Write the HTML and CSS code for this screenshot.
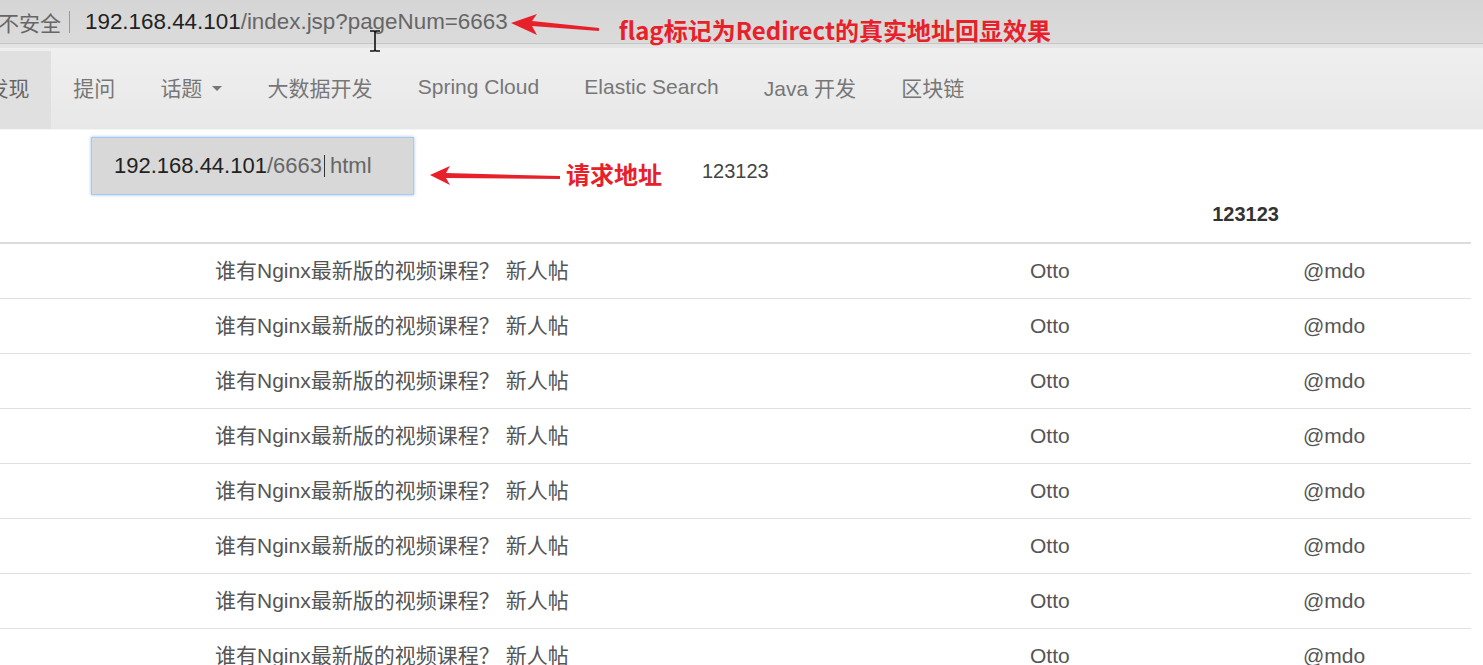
FILE: index.html
```html
<!DOCTYPE html>
<html lang="zh-CN">
<head>
    <meta charset="UTF-8">
    <meta name="viewport" content="width=device-width, initial-scale=1.0">
    <title>社区 - 帖子列表</title>
    <link rel="stylesheet" href="styles.css">
</head>
<body>
    <!-- Адресная строка браузера -->
    <div class="address-bar">
        <span class="insecure">不安全</span>
        <span class="divider"></span>
        <span class="url"><span class="host">192.168.44.101</span>/index.jsp?pageNum=6663</span>
        <svg class="arrow arrow-top" width="90" height="24" viewBox="0 0 90 24">
            <polygon points="0,9 26,0 21,7 88,14 88,17 21,12 26,21" fill="#e8202a"/>
        </svg>
        <span class="note note-top">flag标记为Redirect的真实地址回显效果</span>
    </div>
    <div class="bar-strip"></div>

    <!-- Навигация -->
    <nav class="navbar">
        <ul class="nav-list">
            <li class="nav-item active">发现</li>
            <li class="nav-item">提问</li>
            <li class="nav-item">话题<span class="caret"></span></li>
            <li class="nav-item">大数据开发</li>
            <li class="nav-item">Spring Cloud</li>
            <li class="nav-item">Elastic Search</li>
            <li class="nav-item">Java 开发</li>
            <li class="nav-item">区块链</li>
        </ul>
    </nav>

    <!-- Строка с адресом запроса -->
    <div class="request-row">
        <div class="request-box"><span class="host">192.168.44.101</span>/6663<span class="text-caret"></span>html</div>
        <svg class="arrow arrow-request" width="132" height="22" viewBox="0 0 132 22">
            <polygon points="0,9 20,0 16,7 130,10 130,13 16,12 20,19" fill="#e8202a"/>
        </svg>
        <span class="note note-request">请求地址</span>
        <span class="request-value">123123</span>
    </div>

    <!-- Таблица тем -->
    <table class="topic-table">
        <colgroup>
            <col class="col-index">
            <col class="col-title">
            <col class="col-author">
            <col class="col-user">
        </colgroup>
        <thead>
            <tr>
                <th></th>
                <th></th>
                <th class="head-num">123123</th>
                <th></th>
            </tr>
        </thead>
        <tbody>
            <tr><td></td><td>谁有Nginx最新版的视频课程？<span class="tag">新人帖</span></td><td>Otto</td><td>@mdo</td></tr>
            <tr><td></td><td>谁有Nginx最新版的视频课程？<span class="tag">新人帖</span></td><td>Otto</td><td>@mdo</td></tr>
            <tr><td></td><td>谁有Nginx最新版的视频课程？<span class="tag">新人帖</span></td><td>Otto</td><td>@mdo</td></tr>
            <tr><td></td><td>谁有Nginx最新版的视频课程？<span class="tag">新人帖</span></td><td>Otto</td><td>@mdo</td></tr>
            <tr><td></td><td>谁有Nginx最新版的视频课程？<span class="tag">新人帖</span></td><td>Otto</td><td>@mdo</td></tr>
            <tr><td></td><td>谁有Nginx最新版的视频课程？<span class="tag">新人帖</span></td><td>Otto</td><td>@mdo</td></tr>
            <tr><td></td><td>谁有Nginx最新版的视频课程？<span class="tag">新人帖</span></td><td>Otto</td><td>@mdo</td></tr>
            <tr><td></td><td>谁有Nginx最新版的视频课程？<span class="tag">新人帖</span></td><td>Otto</td><td>@mdo</td></tr>
        </tbody>
    </table>

    <!-- Курсор мыши поверх страницы -->
    <svg class="ibeam" width="14" height="22" viewBox="0 0 14 22">
        <path d="M2 1h4l1 1 1-1h4M7 2v18M2 21h4l1-1 1 1h4" stroke="#111" stroke-width="1.6" fill="none"/>
    </svg>
</body>
</html>
```

FILE: styles.css
```css
/* Общие стили */
html, body {
    margin: 0;
    padding: 0;
}

body {
    font-family: "Liberation Sans", "Noto Sans CJK SC", sans-serif;
    background-color: #fff;
    color: #333;
    width: 1483px;
    height: 665px;
    overflow: hidden;
    position: relative;
}

/* Адресная строка */
.address-bar {
    height: 44px;
    display: flex;
    align-items: center;
    background: linear-gradient(#d5d5d5, #dbdbdb);
    border-bottom: 1px solid #c6c6c6;
    box-sizing: border-box;
    white-space: nowrap;
}

.insecure {
    font-size: 21px;
    color: #666;
    margin-left: -2px;
}

.divider {
    width: 1px;
    height: 22px;
    background-color: #999;
    margin: 0 15px 0 8px;
}

.url {
    font-size: 22.4px;
    color: #666;
}

.url .host,
.request-box .host {
    color: #222;
}

.arrow-top {
    margin: 8px 0 0 3px;
}

.note {
    font-family: "Noto Sans CJK SC", "Liberation Sans", sans-serif;
    font-weight: bold;
    color: #e8202a;
    font-size: 24px;
}

.note-top {
    margin: 16px 0 0 18px;
    letter-spacing: 0;
}

.bar-strip {
    height: 4px;
    background-color: #e4e4e4;
}

/* Навигация */
.navbar {
    height: 82px;
    background: linear-gradient(#efefef, #e8e8e8);
    border-bottom: 1px solid #f5f5f5;
    box-sizing: border-box;
}

.nav-list {
    list-style: none;
    margin: 0 0 0 -35px;
    padding: 0;
    display: flex;
    height: 100%;
}

.nav-item {
    display: flex;
    align-items: center;
    padding: 0 22.6px 6px;
    margin-top: 3px;
    font-size: 21px;
    color: #777;
}

.nav-item.active {
    background-color: #e0e0e0;
    color: #666;
    padding-right: 21px;
}

.caret {
    width: 0;
    height: 0;
    margin: 2px 0 0 10px;
    border-left: 5px solid transparent;
    border-right: 5px solid transparent;
    border-top: 5px solid #777;
}

/* Строка с адресом запроса */
.request-row {
    display: flex;
    align-items: center;
    padding: 7px 0 0 91px;
    height: 58px;
}

.request-box {
    width: 323px;
    height: 58px;
    box-sizing: border-box;
    padding: 0 0 0 22px;
    display: flex;
    align-items: center;
    background-color: #d8d8d8;
    border: 1px solid #a9c9ee;
    box-shadow: 0 0 3px rgba(110, 165, 230, 0.7);
    font-size: 22px;
    color: #666;
}

.text-caret {
    display: inline-block;
    width: 1px;
    height: 22px;
    background-color: #333;
    margin: 0 5px 0 2px;
}

.arrow-request {
    margin: 22px 0 0 16px;
}

.note-request {
    margin: 14px 0 0 4px;
}

.request-value {
    font-size: 20px;
    color: #444;
    margin: 10px 0 0 40px;
}

/* Таблица тем */
.topic-table {
    width: 1471px;
    border-collapse: collapse;
    table-layout: fixed;
    font-size: 21px;
    color: #555;
}

.col-index {
    width: 200px;
}

.col-title {
    width: 815px;
}

.col-author {
    width: 273px;
}

.col-user {
    width: 183px;
}

.topic-table th {
    line-height: 39px;
    padding: 0 0 8px;
    font-size: 20px;
    border-bottom: 2px solid #dcdcdc;
}

.topic-table th.head-num {
    text-align: right;
    padding-right: 9px;
    color: #333;
}

.topic-table td {
    line-height: 54px;
    padding: 0 15px;
    border-bottom: 1px solid #e0e0e0;
    white-space: nowrap;
}

.tag {
    margin-left: 6px;
}

/* Курсор */
.ibeam {
    position: absolute;
    left: 368px;
    top: 30px;
}
```
